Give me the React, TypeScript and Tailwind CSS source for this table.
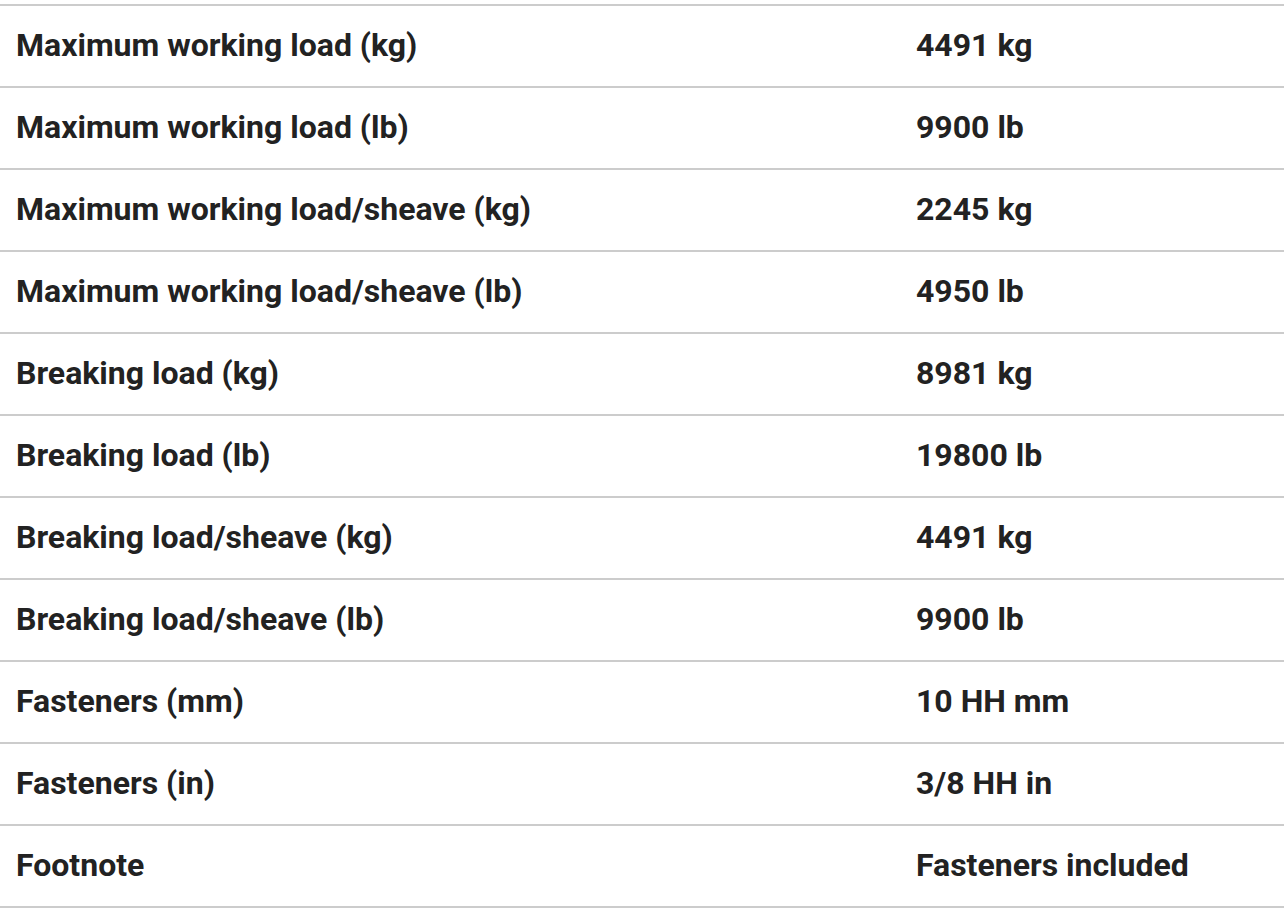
import React from 'react';

interface SpecRow {
  label: string;
  value: string;
}

const rows: SpecRow[] = [
  { label: 'Maximum working load (kg)', value: '4491 kg' },
  { label: 'Maximum working load (lb)', value: '9900 lb' },
  { label: 'Maximum working load/sheave (kg)', value: '2245 kg' },
  { label: 'Maximum working load/sheave (lb)', value: '4950 lb' },
  { label: 'Breaking load (kg)', value: '8981 kg' },
  { label: 'Breaking load (lb)', value: '19800 lb' },
  { label: 'Breaking load/sheave (kg)', value: '4491 kg' },
  { label: 'Breaking load/sheave (lb)', value: '9900 lb' },
  { label: 'Fasteners (mm)', value: '10 HH mm' },
  { label: 'Fasteners (in)', value: '3/8 HH in' },
  { label: 'Footnote', value: 'Fasteners included' },
];

export default function App() {
  return (
    <div className="bg-white pt-1 font-['Roboto',sans-serif] text-[#222222]">
      <table className="w-full border-collapse text-[32px] font-bold">
        <tbody>
          {rows.map((row) => (
            <tr key={row.label} className="h-[82px] border-y-2 border-[#cccccc]">
              <td className="w-[900px] px-4 pb-[2px] align-middle">{row.label}</td>
              <td className="px-4 pb-[2px] align-middle">{row.value}</td>
            </tr>
          ))}
        </tbody>
      </table>
    </div>
  );
}
